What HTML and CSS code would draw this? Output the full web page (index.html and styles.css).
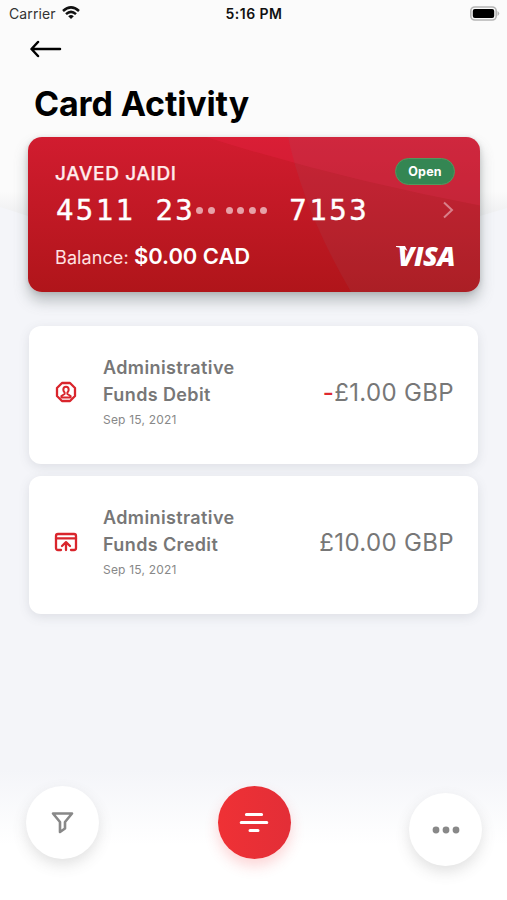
FILE: index.html
```html
<!DOCTYPE html>
<html lang="en">
<head>
<meta charset="utf-8">
<title>Card Activity</title>
<link rel="stylesheet" href="styles.css">
</head>
<body>
<div class="screen">
  <svg class="backdrop" viewBox="0 0 507 240" aria-hidden="true"><defs><linearGradient id="crest" x1="0" y1="0" x2="0" y2="1"><stop offset="0.8" stop-color="#fbfbfb"/><stop offset="0.93" stop-color="#ebecee"/></linearGradient></defs><path d="M0 0H507V208L480 216Q254 262 28 216L0 207Z" fill="url(#crest)"/></svg>
  <header class="status">
    <div class="carrier"><span>Carrier</span>
      <svg width="18" height="14" viewBox="0 0 18 14" fill="none" stroke="#111" stroke-width="2.5"><path d="M1 5Q9-2.2 17 5M4 8.2Q9 3.6 14 8.2"/><path d="M6.2 10.2Q9 8 11.8 10.2L9 13Z" fill="#111" stroke="none"/></svg>
    </div>
    <span class="clock">5:16 PM</span>
    <svg class="battery" width="31" height="15" viewBox="0 0 31 15"><rect x="1.8" y="1" width="25.4" height="13" rx="4" fill="#fafafa" stroke="#b5b5b5" stroke-width="1.6"/><rect x="3.8" y="3" width="21.4" height="9" rx="2" fill="#000"/><path d="M28.5 5Q32 7.5 28.5 10Z" fill="#b5b5b5"/></svg>
  </header>
  <nav class="back"><svg width="33" height="18" viewBox="0 0 33 18" fill="none" stroke="#000" stroke-width="2.5" stroke-linecap="round" stroke-linejoin="round"><path d="M30 9H2M8 2L1.5 9L8 16"/></svg></nav>
  <h1>Card Activity</h1>
  <main>
    <section class="card">
      <svg class="sheen" viewBox="0 0 452 156" preserveAspectRatio="none" aria-hidden="true"><path d="M178 0H452V69Q310 42 178 0Z" fill="#ff2854" opacity=".2"/><path d="M260 0Q276 75 323 156H452V0Z" fill="#8e6b7c" opacity=".12"/></svg>
      <div class="row"><span class="holder">JAVED JAIDI</span><span class="badge">Open</span></div>
      <div class="row number-row"><div class="number"><span>4511</span><span>23</span><i class="dots"><b></b><b></b></i><i class="dots four"><b></b><b></b><b></b><b></b></i><span>7153</span></div>
        <svg class="chevron" width="12" height="18" viewBox="0 0 12 18" fill="none" stroke="#d9808a" stroke-width="2"><path d="M2 1.5L10 9L2 16.5"/></svg></div>
      <div class="row balance-row"><div class="balance"><span>Balance:</span> <strong>$0.00 CAD</strong></div>
        <div class="visa">VISA<svg class="flag" width="12" height="5" viewBox="0 0 12 5"><path d="M0 0H9L11.5 5Q7 1.5 0 1Z" fill="#fff"/></svg></div></div>
    </section>
    <article class="item">
      <svg class="icon" width="24" height="24" viewBox="0 0 24 24" fill="none" stroke="#d9252c" stroke-width="2.3" stroke-linejoin="round"><path d="M8 3H16L21 8V16L16 21H8L3 16V8Z"/><path d="M12 6.8C9.8 6.8 9.3 8.4 9.3 9.9Q9.5 11.5 10.6 12.4V14L7.4 16V17.5H16.6V16L13.4 14V12.4Q14.5 11.5 14.7 9.9C14.7 8.4 14.2 6.8 12 6.8Z" stroke-width="2"/></svg>
      <div class="info"><h2>Administrative<br>Funds Debit</h2><time>Sep 15, 2021</time></div>
      <div class="amount"><span class="minus">-</span>£1.00 GBP</div>
    </article>
    <article class="item">
      <svg class="icon" width="24" height="24" viewBox="0 0 24 24" fill="none" stroke="#d9252c" stroke-width="2.3" stroke-linecap="round" stroke-linejoin="round"><path d="M7 20H4Q2 20 2 18V6Q2 4 4 4H20Q22 4 22 6V18Q22 20 20 20H17"/><path d="M2 8.3H22M12 20V13M8 16L12 12.2L16 16"/></svg>
      <div class="info"><h2>Administrative<br>Funds Credit</h2><time>Sep 15, 2021</time></div>
      <div class="amount">£10.00 GBP</div>
    </article>
  </main>
  <footer>
    <div class="fab"><svg width="24" height="24" viewBox="0 0 24 24" fill="none" stroke="#888" stroke-width="2.6" stroke-linejoin="round"><path d="M2 2.5H21L14 11V17.5L9 21V11Z"/></svg></div>
    <div class="fab primary"><svg width="30" height="22" viewBox="0 0 30 22" stroke="#fff" stroke-width="3" stroke-linecap="round"><path d="M7.4 2.5H22.6M2.2 10.5H27.8M11 18.5H19"/></svg></div>
    <div class="fab more"><svg width="28" height="8" viewBox="0 0 28 8" fill="#888"><circle cx="4" cy="4" r="3.4"/><circle cx="14" cy="4" r="3.4"/><circle cx="24" cy="4" r="3.4"/></svg></div>
  </footer>
</div>
</body>
</html>
```

FILE: styles.css
```css
* { box-sizing: border-box; }
body { margin: 0; font-family: Inter, "Liberation Sans", sans-serif; color: #777; }
svg { display: block; flex: none; }
.screen { position: relative; isolation: isolate; height: 900px; overflow: hidden; display: flex; flex-direction: column; background: linear-gradient(#f4f5f9 0 770px, #fff 845px); }
.backdrop { position: absolute; z-index: -1; left: 0; top: 0; width: 507px; height: 240px; }
.status { height: 28px; padding: 0 7px 0 9px; display: grid; grid-template-columns: 1fr auto 1fr; align-items: center; font-size: 14px; color: #333; }
.carrier { display: flex; align-items: center; gap: 6px; margin-top: -1px; letter-spacing: .1px; }
.carrier svg { margin-top: -1px; }
.clock { color: #111; font-weight: 600; letter-spacing: .45px; margin: -2px 0 0 -1px; }
.battery { justify-self: end; margin-top: -2px; }
.back { height: 43px; padding: 12px 0 0 30px; }
h1 { margin: 0; height: 65px; padding-left: 34px; font-size: 34px; line-height: 65px; font-weight: 700; letter-spacing: -.15px; color: #000; }
main { flex: 1; padding: 0 27px; }
.card { position: relative; isolation: isolate; height: 155px; padding: 21px 26px 0 27px; border-radius: 14px; color: #fff; background: linear-gradient(#d11c2f, #b0151a); box-shadow: 0 9px 14px #6b74766b, 0 1px 5px #55555538; margin: 1px 0 34px 1px; }
.sheen { position: absolute; z-index: -1; inset: 0; width: 100%; height: 100%; border-radius: 14px; }
.row { display: flex; justify-content: space-between; align-items: center; height: 30px; }
.holder { font-size: 19px; font-weight: 500; color: #ffecec; letter-spacing: .65px; -webkit-text-stroke: .25px #ffecec; }
.badge { width: 60px; height: 27px; border-radius: 14px; background: #348653; border: 1px solid #54975d; text-align: center; line-height: 25px; font-size: 12.5px; font-weight: 700; letter-spacing: .2px; margin: -3px -1px 0 0; }
.number-row { height: 44px; }
.number { display: flex; align-items: center; margin-left: 1px; font-family: "DejaVu Sans Mono", monospace; font-size: 29px; letter-spacing: 2.4px; -webkit-text-stroke: .4px #fff; }
.number span + span { margin-left: 20px; }
.number span:last-child { margin-left: 22px; letter-spacing: 2.6px; }
.dots { display: flex; gap: 4.5px; margin-left: 1px; }
.number .four { margin-left: 11px; }
.dots b { width: 7px; height: 7px; border-radius: 50%; background: #e7a1a7; }
.chevron { margin-right: 0; }
.balance-row { height: 48px; }
.balance { font-size: 18px; color: #ffe1e1; letter-spacing: .1px; }
.balance strong { font-size: 22px; font-weight: 600; color: #fff; letter-spacing: -.05px; }
.visa { position: relative; font: italic 800 27px/28px "Open Sans", sans-serif; letter-spacing: -.5px; margin-right: -1px; }
.flag { position: absolute; left: -2px; top: 4px; }
.item { height: 138px; margin: 0 2px 12px; padding: 0 25px 8px; border-radius: 12px; background: #fff; display: flex; align-items: center; box-shadow: 0 3px 11px #555e6824; }
.info { margin: -1px 0 0 25px; flex: 1; }
h2 { margin: 0; font-size: 18px; line-height: 27px; font-weight: 600; letter-spacing: .38px; }
time { display: block; margin-top: 4px; font-size: 12px; line-height: 15px; letter-spacing: .2px; color: #888; }
.icon { margin-top: 2px; }
.amount { font-size: 24px; margin: 3px -1px 0 0; letter-spacing: .35px; }
.minus { color: #de2930; font-weight: 500; }
footer { height: 114px; padding: 0 25px 0 26px; display: flex; justify-content: space-between; align-items: flex-start; }
.fab { width: 73px; height: 73px; border-radius: 50%; display: grid; place-items: center; background: #fff; box-shadow: 0 6px 14px #5555552b; }
.primary { background: linear-gradient(90deg, #ef3135, #e32e37); box-shadow: 0 7px 14px #ef383c36; }
.more { margin-top: 7px; }
```
